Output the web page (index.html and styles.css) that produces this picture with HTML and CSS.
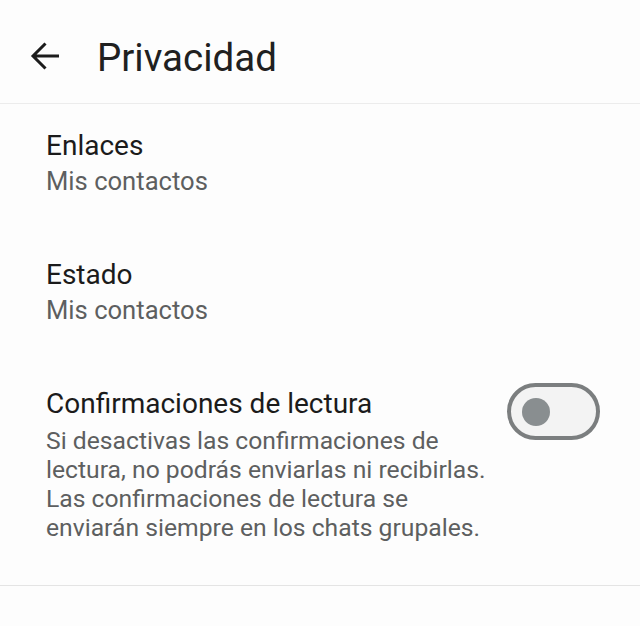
FILE: index.html
```html
<!DOCTYPE html>
<html lang="es">

<head>
  <meta charset="UTF-8">
  <meta name="viewport" content="width=device-width, initial-scale=1.0">
  <title>Privacidad</title>
  <link rel="stylesheet" href="styles.css">
</head>

<body>
  <header class="header">
    <svg class="back" width="32" height="32" viewBox="0 0 32 32">
      <path d="M30 16H4.5M16.5 3.5L4 16l12.5 12.5" fill="none" stroke="#1c1c1c" stroke-width="3" />
    </svg>
    <h1 class="title">Privacidad</h1>
  </header>
  <main class="list">
    <div class="item">
      <div class="item-text">
        <p class="item-title">Enlaces</p>
        <p class="item-sub">Mis contactos</p>
      </div>
    </div>
    <div class="item">
      <div class="item-text">
        <p class="item-title">Estado</p>
        <p class="item-sub">Mis contactos</p>
      </div>
    </div>
    <div class="item">
      <div class="item-text">
        <p class="item-title">Confirmaciones de lectura</p>
        <p class="item-desc">Si desactivas las confirmaciones de lectura, no podrás enviarlas ni recibirlas. Las confirmaciones de lectura se enviarán siempre en los chats grupales.</p>
      </div>
      <div class="toggle">
        <span class="knob"></span>
      </div>
    </div>
  </main>
</body>

</html>
```

FILE: styles.css
```css
body {
  margin: 0;
  padding: 0;
  background: #fdfdfd;
  font-family: Roboto, "Noto Sans", sans-serif;
  color: #1b1b1b;
}

.header {
  display: flex;
  align-items: flex-start;
  height: 104px;
  padding: 34px 0 0 29px;
  border-bottom: 1px solid #ececec;
  box-sizing: border-box;
}

.back {
  display: block;
  margin-top: 6px;
}

.title {
  margin: 0 0 0 36px;
  font-size: 38.5px;
  font-weight: 400;
  line-height: 48px;
  color: #202020;
}

.list {
  display: flex;
  flex-direction: column;
  gap: 61px;
  padding: 24px 40px 43px 46px;
  border-bottom: 1px solid #e4e4e4;
}

.item {
  display: flex;
  align-items: flex-start;
  justify-content: space-between;
}

.item-text p {
  margin: 0;
}

.item-title {
  font-size: 28px;
  line-height: 35px;
}

.item-sub {
  margin-top: 4px !important;
  font-size: 25.6px;
  line-height: 29px;
  color: #5d5f60;
}

.item-desc {
  width: 445px;
  margin-top: 5px !important;
  font-size: 24.7px;
  line-height: 29px;
  color: #5d5f60;
}

.toggle {
  display: flex;
  align-items: center;
  width: 93px;
  height: 57px;
  margin-top: -3px;
  padding-left: 11px;
  border: 4px solid #7b7e7f;
  border-radius: 30px;
  background: #f3f3f3;
  box-sizing: border-box;
}

.knob {
  width: 28px;
  height: 28px;
  border-radius: 50%;
  background: #898e90;
}
```
